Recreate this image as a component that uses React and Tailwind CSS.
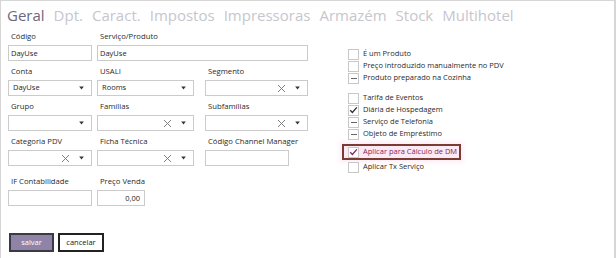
import React from "react";

const font = { fontFamily: '"Open Sans", "Noto Sans", sans-serif' };

const tabs = ["Geral", "Dpt.", "Caract.", "Impostos", "Impressoras", "Armazém", "Stock", "Multihotel"];

const Caret = () => (
    <svg width="7" height="4" viewBox="0 0 7 4" className="shrink-0">
        <path d="M1.2 0.5 L5.8 0.5 L3.5 3.5 Z" fill="#333" />
    </svg>
);

const Clear = () => (
    <svg width="9" height="9" viewBox="0 0 9 9" className="shrink-0">
        <path d="M1 1 L8 8 M8 1 L1 8" stroke="#808080" strokeWidth="1" />
    </svg>
);

const Field = ({ label, w, className = "", children }) => (
    <div className={`flex flex-col ${className}`} style={{ width: w }}>
        <div className="h-[15px] leading-[13px] text-[7.7px] text-[#2a2a2a] pl-[3px] whitespace-nowrap">{label}</div>
        {children}
    </div>
);

const Input = ({ value, right }) => (
    <div className={`h-[16px] border border-[#cbcbcb] bg-white px-[2px] text-[7.5px] leading-[14px] text-[#1e1e1e] ${right ? "text-right pr-[4px]" : ""}`}>
        {value}
    </div>
);

const Select = ({ value, clear }) => (
    <div className="h-[16px] border border-[#cbcbcb] bg-white flex items-center pl-[4px] pr-[6px] text-[7.5px] text-[#1e1e1e]">
        <span className="flex-1">{value}</span>
        {clear && <span className="mr-[8px] flex"><Clear /></span>}
        <Caret />
    </div>
);

const Check = ({ state, color = "#333" }) => (
    <div className="w-[11px] h-[11px] border border-[#c8c8c8] bg-white flex items-center justify-center shrink-0">
        {state === "check" && (
            <svg width="9" height="8" viewBox="0 0 9 8">
                <path d="M1.2 4.2 L3.4 6.4 L7.8 1.4" stroke={color} strokeWidth="1.4" fill="none" />
            </svg>
        )}
        {state === "minus" && <div className="w-[6px] h-px bg-[#666]" />}
    </div>
);

const CheckRow = ({ label, state }) => (
    <div className="h-[12px] flex items-center gap-[4px] text-[7.5px] text-[#2a2a2a] whitespace-nowrap">
        <Check state={state} />
        <span>{label}</span>
    </div>
);

export default function App() {
    return (
        <div className="w-[616px] h-[258px] bg-white border-t border-l border-r-2 border-[#d6d6d6] overflow-hidden" style={font}>
            <div className="flex gap-[9px] pl-[6px] pt-[1px] h-[27px] text-[15px] items-center">
                {tabs.map((t, i) => (
                    <span key={t} className={i === 0 ? "text-[#6c6880]" : "text-[#c6c6ce]"}>{t}</span>
                ))}
            </div>
            <div className="flex">
                <div className="w-[330px] pl-[7px] pt-[2px]">
                    <div className="flex gap-[5px]">
                        <Field label="Código" w={84}><Input value="DayUse" /></Field>
                        <Field label="Serviço/Produto" w={211}><Input value="DayUse" /></Field>
                    </div>
                    <div className="flex gap-[5px] mt-[4px]">
                        <Field label="Conta" w={84}><Select value="DayUse" /></Field>
                        <Field label="USALI" w={97}><Select value="Rooms" /></Field>
                        <Field label="Segmento" w={103} className="ml-[6px]"><Select clear /></Field>
                    </div>
                    <div className="flex gap-[5px] mt-[4px]">
                        <Field label="Grupo" w={84}><Select /></Field>
                        <Field label="Famílias" w={97}><Select clear /></Field>
                        <Field label="Subfamílias" w={103} className="ml-[6px]"><Select clear /></Field>
                    </div>
                    <div className="flex gap-[5px] mt-[4px]">
                        <Field label="Categoria PDV" w={84}><Select clear /></Field>
                        <Field label="Ficha Técnica" w={97}><Select clear /></Field>
                        <Field label="Código Channel Manager" w={84} className="ml-[6px]"><Input /></Field>
                    </div>
                    <div className="flex gap-[5px] mt-[9px]">
                        <Field label="IF Contabilidade" w={84}><Input /></Field>
                        <Field label="Preço Venda" w={48}><Input value="0,00" right /></Field>
                    </div>
                    <div className="flex gap-[4px] mt-[27px] pl-[1px]">
                        <button className="w-[45px] h-[19px] bg-[#8f84a8] border-2 border-[#3a3a44] text-white text-[7.5px] leading-none">salvar</button>
                        <button className="w-[46px] h-[19px] bg-white border-2 border-[#222] text-[#222] text-[7.5px] leading-none">cancelar</button>
                    </div>
                </div>
                <div className="pl-[17px] pt-[20px]">
                    <CheckRow label="É um Produto" />
                    <CheckRow label="Preço introduzido manualmente no PDV" />
                    <CheckRow label="Produto preparado na Cozinha" state="minus" />
                    <div className="h-[8px]" />
                    <CheckRow label="Tarifa de Eventos" />
                    <CheckRow label="Diária de Hospedagem" state="check" />
                    <CheckRow label="Serviço de Telefonia" state="minus" />
                    <CheckRow label="Objeto de Empréstimo" state="minus" />
                    <div className="mt-[4px] -ml-[6px] w-[119px] h-[16px] border-2 border-[#7a3b34] bg-[#fbeaf3] shadow-[0_0_4px_3px_#fdf0f7] flex items-center gap-[4px] pl-[4px] text-[7.5px] text-[#8a1f55] whitespace-nowrap">
                        <Check state="check" color="#8a2465" />
                        <span>Aplicar para Cálculo de DM</span>
                    </div>
                    <div className="mt-[1px]">
                        <CheckRow label="Aplicar Tx Serviço" />
                    </div>
                </div>
            </div>
        </div>
    );
}
